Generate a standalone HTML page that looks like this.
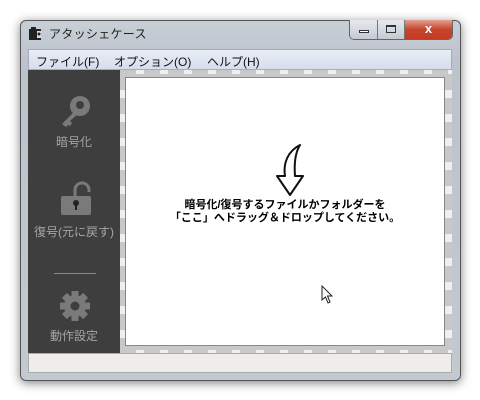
<!DOCTYPE html>
<html><head><meta charset="utf-8"><style>
*{margin:0;padding:0;box-sizing:border-box}
body{width:480px;height:400px;background:#fff;position:relative;overflow:hidden;font-family:"Liberation Sans","Noto Sans CJK JP",sans-serif}
.win{position:absolute;left:20px;top:20px;width:441px;height:361px;border:1px solid #555;border-radius:6px;background:linear-gradient(#c9cfd7,#bcc3cc 40px,#c3c9d1);box-shadow:0 2px 10px rgba(0,0,0,.5)}
.title{position:absolute;left:28px;top:25px;font-size:12px;color:#222;letter-spacing:.3px}
.btns{position:absolute;left:349px;top:20px;width:104px;height:20px;border:1px solid #666;border-top:none;border-radius:0 0 5px 5px;overflow:hidden;display:flex}
.b{height:100%;background:linear-gradient(#e6e9ee,#c4cad3);border-right:1px solid #777}
.menu{position:absolute;left:28px;top:49px;width:424px;height:21px;background:linear-gradient(#e9edf6,#d6deed);border:1px solid #aab;font-size:12px;color:#111;padding:3px 0 0 8px}
.menu span{position:absolute;top:3px}
.side{position:absolute;left:28px;top:70px;width:92px;height:283px;background:#3e3e3e;color:#a5a5a5;font-size:12px;text-align:center}
.drop{position:absolute;left:120px;top:70px;width:332px;height:283px;background:repeating-linear-gradient(90deg,#c8c8c8 0 16px,#efefef 16px 24px)}
.drop2{position:absolute;left:120px;top:74px;width:332px;height:276px;background:repeating-linear-gradient(180deg,#c8c8c8 0 16px,#efefef 16px 24px)}
.inner{position:absolute;left:125px;top:77px;width:320px;height:269px;background:#fff;border:1px solid #888}
.msg{position:absolute;left:125px;top:199px;width:320px;text-align:center;font-size:11px;font-weight:bold;line-height:13px;color:#000}
.status{position:absolute;left:28px;top:353px;width:424px;height:20px;background:#efedea;border:1px solid #aaa}
</style></head><body>
<div class="win"></div>
<svg style="position:absolute;left:28px;top:26px" width="16" height="16"><rect x="1" y="3" width="12" height="11" fill="#222"/><rect x="3" y="1" width="5" height="3" fill="#222"/><rect x="9" y="5" width="4" height="7" fill="#ddd"/><circle cx="11" cy="8" r="1.5" fill="#222"/></svg>
<div class="title" style="left:49px">アタッシェケース</div>
<div class="btns"><div class="b" style="width:28px;position:relative"><div style="position:absolute;left:9px;top:10px;width:10px;height:3px;border:1px solid #333;background:#fff"></div></div><div class="b" style="width:27px;position:relative"><div style="position:absolute;left:8px;top:5px;width:10px;height:8px;border:1px solid #333;border-top-width:2px"></div></div><div style="flex:1;background:linear-gradient(#e3a08f,#c6442c 50%,#c43b24);color:#fff;font-weight:bold;font-size:13px;text-align:center;line-height:18px">x</div></div>
<div class="menu"><span style="left:7px">ファイル(F)</span><span style="left:85px">オプション(O)</span><span style="left:178px">ヘルプ(H)</span></div>
<div class="side">
<svg style="position:absolute;left:30px;top:24px" width="36" height="34" viewBox="0 0 36 34"><circle cx="22" cy="12" r="10" fill="#7a7a7a"/><circle cx="22" cy="11" r="4" fill="#3e3e3e"/><path d="M16 18 L4 30 L8 33 L10 31 L12 32 L14 29 L12 27 L20 20Z" fill="#7a7a7a"/></svg>
<div style="position:absolute;left:0;width:92px;top:63px">暗号化</div>
<svg style="position:absolute;left:30px;top:110px" width="36" height="36" viewBox="0 0 36 36"><path d="M17 16 V10 a7 7 0 0 1 14 0 V12" stroke="#7a7a7a" stroke-width="3" fill="none"/><rect x="3" y="16" width="30" height="19" rx="2" fill="#7a7a7a"/><circle cx="18" cy="23" r="3" fill="#222"/><rect x="17" y="23" width="2" height="7" fill="#222"/></svg>
<div style="position:absolute;left:-4px;width:100px;top:153px">復号(元に戻す)</div>
<div style="position:absolute;left:26px;top:203px;width:42px;height:1px;background:#888"></div>
<svg style="position:absolute;left:31px;top:220px" width="32" height="32" viewBox="-16 -16 32 32"><g fill="#7a7a7a"><circle r="11"/><rect x="-3.5" y="-15" width="7" height="30"/><rect x="-3.5" y="-15" width="7" height="30" transform="rotate(45)"/><rect x="-3.5" y="-15" width="7" height="30" transform="rotate(90)"/><rect x="-3.5" y="-15" width="7" height="30" transform="rotate(135)"/></g><circle r="4.5" fill="#3e3e3e"/></svg>
<div style="position:absolute;left:0;width:92px;top:257px">動作設定</div>
</div>
<div class="drop"></div><div class="drop2"></div>
<div class="inner"></div>
<svg style="position:absolute;left:268px;top:143px" width="36" height="56" viewBox="0 0 36 56"><path d="M32 2 C20 8 15 20 17 33 L9 33 L22 52 L35 33 L27 33 C26 20 27 10 32 2Z" fill="#fff" stroke="#111" stroke-width="2" stroke-linejoin="round"/></svg>
<div class="msg">暗号化/復号するファイルかフォルダーを<br>「ここ」へドラッグ＆ドロップしてください。</div>
<svg style="position:absolute;left:321px;top:285px" width="14" height="20"><path d="M1 1 L1 15 L4.5 12 L7 18 L9 17 L6.5 11 L11 11Z" fill="#fff" stroke="#222"/></svg>
<div class="status"></div>
</body></html>
